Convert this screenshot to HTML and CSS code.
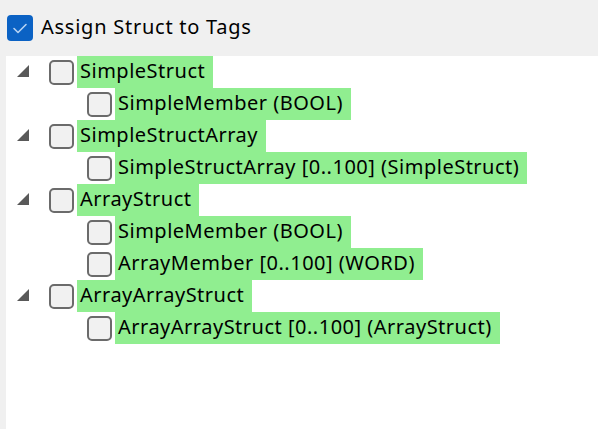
FILE: index.html
```html
<!DOCTYPE html>
<html>
<head>
<meta charset="utf-8">
<link rel="stylesheet" href="styles.css">
</head>
<body>
<div class="app">
  <header class="header">
    <span class="check checked">
      <svg viewBox="0 0 26 26" width="26" height="26"><polyline points="7,13.5 11,17.5 19,9.5" fill="none" stroke="#b7d3f3" stroke-width="1.6" stroke-linecap="round" stroke-linejoin="round"/></svg>
    </span>
    <span class="header-label">Assign Struct to Tags</span>
  </header>
  <div class="tree">
    <div class="row parent">
      <svg class="exp" viewBox="0 0 12 12" width="12" height="12"><polygon points="12,0 12,12 0,12" fill="#595959"/></svg>
      <span class="box"></span><span class="label">SimpleStruct</span>
    </div>
    <div class="row child">
      <span class="box"></span><span class="label">SimpleMember (BOOL)</span>
    </div>
    <div class="row parent">
      <svg class="exp" viewBox="0 0 12 12" width="12" height="12"><polygon points="12,0 12,12 0,12" fill="#595959"/></svg>
      <span class="box"></span><span class="label">SimpleStructArray</span>
    </div>
    <div class="row child">
      <span class="box"></span><span class="label">SimpleStructArray [0..100] (SimpleStruct)</span>
    </div>
    <div class="row parent">
      <svg class="exp" viewBox="0 0 12 12" width="12" height="12"><polygon points="12,0 12,12 0,12" fill="#595959"/></svg>
      <span class="box"></span><span class="label">ArrayStruct</span>
    </div>
    <div class="row child">
      <span class="box"></span><span class="label">SimpleMember (BOOL)</span>
    </div>
    <div class="row child">
      <span class="box"></span><span class="label">ArrayMember [0..100] (WORD)</span>
    </div>
    <div class="row parent">
      <svg class="exp" viewBox="0 0 12 12" width="12" height="12"><polygon points="12,0 12,12 0,12" fill="#595959"/></svg>
      <span class="box"></span><span class="label">ArrayArrayStruct</span>
    </div>
    <div class="row child">
      <span class="box"></span><span class="label">ArrayArrayStruct [0..100] (ArrayStruct)</span>
    </div>
  </div>
</div>
</body>
</html>
```

FILE: styles.css
```css
html, body {
  margin: 0;
  padding: 0;
  background: #f0f0f0;
}
.app {
  width: 598px;
  height: 429px;
  display: flex;
  flex-direction: column;
  font-family: "Noto Sans", "DejaVu Sans", sans-serif;
  font-size: 20px;
  letter-spacing: 0.5px;
  color: #000;
}
.header {
  height: 56px;
  display: flex;
  align-items: center;
  padding-left: 7px;
  box-sizing: border-box;
}
.check {
  width: 26px;
  height: 26px;
  border-radius: 4px;
  display: block;
  margin-right: 8px;
}
.check svg { display: block; }
.checked {
  background: #0b62c4;
}
.header-label {
  line-height: 26px;
  padding-bottom: 2px;
  letter-spacing: 0.75px;
}
.tree {
  flex: 1;
  margin-left: 6px;
  background: #fff;
}
.row {
  height: 32px;
  display: flex;
  align-items: center;
}
.parent { padding-left: 11px; }
.child { padding-left: 81px; }
.exp {
  display: block;
  width: 12px;
  height: 12px;
  margin-right: 20px;
  margin-top: -2px;
}
.box {
  width: 25px;
  height: 25px;
  box-sizing: border-box;
  border: 2px solid #6b6b6b;
  border-radius: 5px;
  background: #f1f1f1;
  margin-right: 3px;
  margin-top: 1px;
}
.label {
  height: 32px;
  line-height: 30px;
  padding: 0 8px 2px 3px;
  box-sizing: border-box;
  background: #90ee90;
  white-space: nowrap;
}
```
